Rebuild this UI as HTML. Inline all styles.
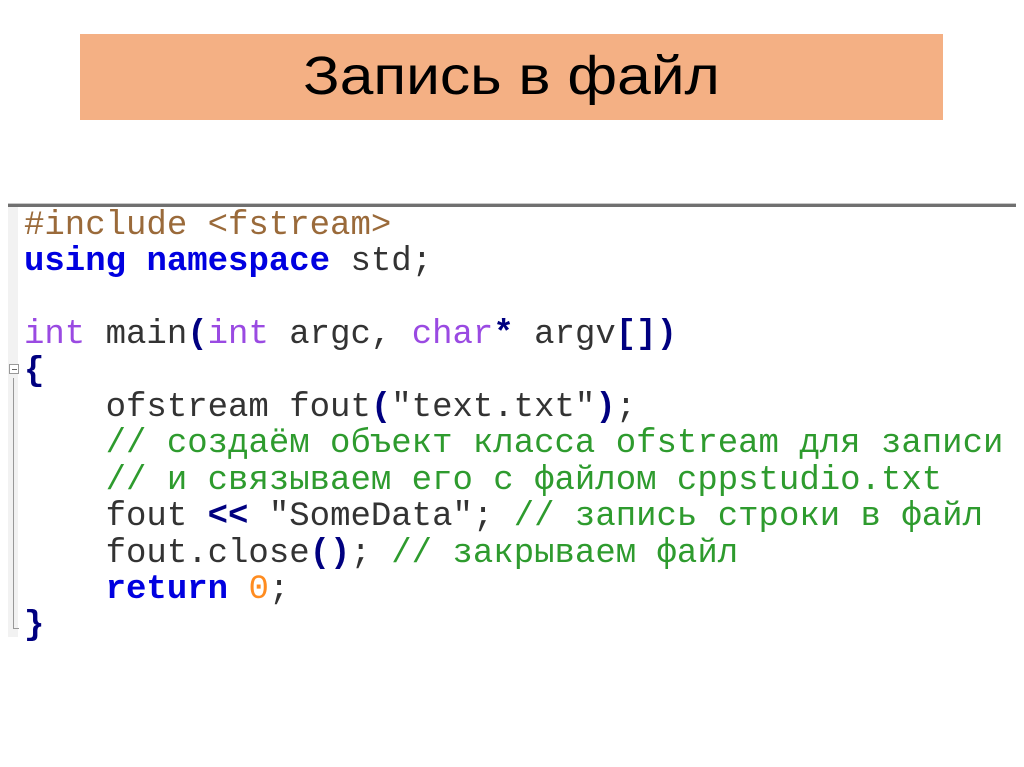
<!DOCTYPE html>
<html><head><meta charset="utf-8"><style>
html,body{margin:0;padding:0;background:#fff;width:1024px;height:767px;overflow:hidden;position:relative}
.title{position:absolute;left:80px;top:34px;width:863px;height:86px;background:#f4b084;}
.title span{position:absolute;left:0;right:0;top:12px;text-align:center;font:54px/60px "Liberation Sans","Noto Sans CJK SC",sans-serif;color:#000;transform:scaleX(1.12)}
.rule{position:absolute;left:8px;top:203px;width:1008px;height:3px;background:#707070;border-top:1px solid #c8c8c8}
.gut{position:absolute;left:8px;top:207px;width:10px;height:430px;background:#f2f2f2}
.vl{position:absolute;left:13px;top:378px;width:1px;height:250px;background:#999}
.hl{position:absolute;left:13px;top:628px;width:6px;height:1px;background:#999}
.box{position:absolute;left:9px;top:364px;width:8px;height:8px;border:1px solid #999;background:#fff}
.box:after{content:"";position:absolute;left:2px;top:4px;width:5px;height:1px;background:#666}
pre{position:absolute;left:24px;top:208px;margin:0;font:34px/36.4px "Liberation Mono","Noto Sans CJK SC",monospace;color:#333}
.pp{color:#9a6a3a}.kw{color:#0000e0;font-weight:bold}.ty{color:#9a4ae2}.br{color:#000080;font-weight:bold}
.cm{color:#2e9b2e}.nu{color:#ff8c20}
</style></head><body>
<div class="title"><span>Запись в файл</span></div>
<div class="rule"></div>
<div class="gut"></div><div class="vl"></div><div class="hl"></div><div class="box"></div>
<pre><span class="pp">#include &lt;fstream&gt;</span>
<span class="kw">using</span> <span class="kw">namespace</span> std;

<span class="ty">int</span> main<span class="br">(</span><span class="ty">int</span> argc, <span class="ty">char</span><span class="br">*</span> argv<span class="br">[])</span>
<span class="br">{</span>
    ofstream fout<span class="br">(</span>"text.txt"<span class="br">)</span>;
    <span class="cm">// создаём объект класса ofstream для записи</span>
    <span class="cm">// и связываем его с файлом cppstudio.txt</span>
    fout <span class="br">&lt;&lt;</span> "SomeData"; <span class="cm">// запись строки в файл</span>
    fout.close<span class="br">()</span>; <span class="cm">// закрываем файл</span>
    <span class="kw">return</span> <span class="nu">0</span>;
<span class="br">}</span></pre>
</body></html>
